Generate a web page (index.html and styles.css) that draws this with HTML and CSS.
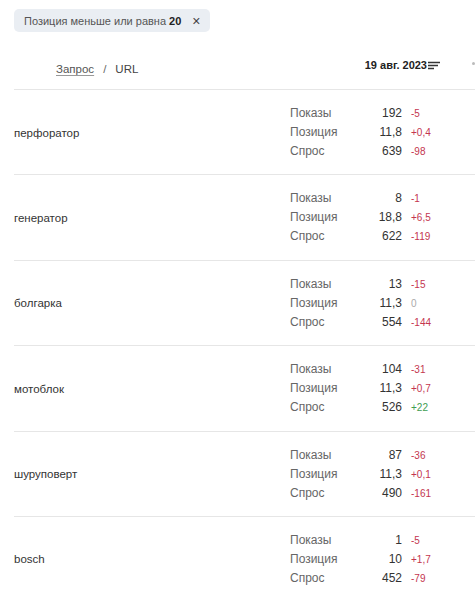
FILE: index.html
```html
<!DOCTYPE html>
<html lang="ru">
<head>
<meta charset="utf-8">
<link rel="stylesheet" href="styles.css">
</head>
<body>
<div class="page">
  <div class="chip">Позиция меньше или равна <b>20</b><span class="chip-x">×</span></div>
  <div class="head">
    <div class="head-left"><span class="link">Запрос</span><span class="sep">/</span><span>URL</span></div>
    <div class="head-date">19 авг. 2023<svg class="sort" width="13" height="10" viewBox="0 0 13 10"><path d="M0 1.5h12M0 4.5h10M0 7.5h6" stroke="#333" stroke-width="1.3"/></svg></div>
    <div class="head-edge"></div>
  </div>
  <div class="rows">
    <div class="row"><div class="q">перфоратор</div><div class="m">
      <span class="l">Показы</span><span class="v">192</span><span class="d neg">-5</span>
      <span class="l">Позиция</span><span class="v">11,8</span><span class="d neg">+0,4</span>
      <span class="l">Спрос</span><span class="v">639</span><span class="d neg">-98</span></div></div>
    <div class="row"><div class="q">генератор</div><div class="m">
      <span class="l">Показы</span><span class="v">8</span><span class="d neg">-1</span>
      <span class="l">Позиция</span><span class="v">18,8</span><span class="d neg">+6,5</span>
      <span class="l">Спрос</span><span class="v">622</span><span class="d neg">-119</span></div></div>
    <div class="row"><div class="q">болгарка</div><div class="m">
      <span class="l">Показы</span><span class="v">13</span><span class="d neg">-15</span>
      <span class="l">Позиция</span><span class="v">11,3</span><span class="d zero">0</span>
      <span class="l">Спрос</span><span class="v">554</span><span class="d neg">-144</span></div></div>
    <div class="row"><div class="q">мотоблок</div><div class="m">
      <span class="l">Показы</span><span class="v">104</span><span class="d neg">-31</span>
      <span class="l">Позиция</span><span class="v">11,3</span><span class="d neg">+0,7</span>
      <span class="l">Спрос</span><span class="v">526</span><span class="d pos">+22</span></div></div>
    <div class="row"><div class="q">шуруповерт</div><div class="m">
      <span class="l">Показы</span><span class="v">87</span><span class="d neg">-36</span>
      <span class="l">Позиция</span><span class="v">11,3</span><span class="d neg">+0,1</span>
      <span class="l">Спрос</span><span class="v">490</span><span class="d neg">-161</span></div></div>
    <div class="row"><div class="q">bosch</div><div class="m">
      <span class="l">Показы</span><span class="v">1</span><span class="d neg">-5</span>
      <span class="l">Позиция</span><span class="v">10</span><span class="d neg">+1,7</span>
      <span class="l">Спрос</span><span class="v">452</span><span class="d neg">-79</span></div></div>
  </div>
</div>
</body>
</html>
```
FILE: styles.css
```css
html, body { margin: 0; padding: 0; background: #fff; }
body { font-family: "Liberation Sans", Arial, sans-serif; color: #333; font-size: 12px; overflow: hidden; }
.page { padding: 9px 0 0 14px; }
.chip { display: inline-flex; align-items: center; height: 23px; padding: 0 9px 0 10px; background: #eaeef3; border-radius: 5px; color: #555; font-size: 11px; }
.chip b { color: #222; font-weight: bold; margin-left: 3px; }
.chip-x { margin-left: 11px; font-size: 14px; color: #444; line-height: 1; }
.head { display: flex; align-items: center; height: 42px; margin-top: 15px; border-bottom: 1px solid #e6e6e6; }
.head-left { flex: 1; padding-left: 42px; padding-top: 2px; color: #444; font-size: 11.5px; }
.link { text-decoration: underline; text-decoration-color: #999; text-underline-offset: 2px; color: #555; }
.sep { margin: 0 9px 0 9px; color: #666; }
.head-date { display: flex; align-items: center; font-size: 11px; font-weight: bold; color: #222; margin-top: -6px; }
.sort { margin-left: 1px; margin-top: 2px; }
.head-edge { width: 3px; height: 3px; background: #bbb; border-radius: 2px; margin-left: 31px; margin-top: -10px; }
.row { display: flex; align-items: center; padding: 14px 0 13.4px; border-bottom: 1px solid #e6e6e6; }
.q { flex: 0 0 276px; color: #333; font-size: 11.5px; }
.m { display: grid; grid-template-columns: 66px 37px auto; column-gap: 9px; line-height: 19px; }
.l { color: #666; }
.v { text-align: right; color: #333; }
.d { font-size: 10px; }
.neg { color: #c4364f; }
.pos { color: #3f9d52; }
.zero { color: #aaa; }
```
